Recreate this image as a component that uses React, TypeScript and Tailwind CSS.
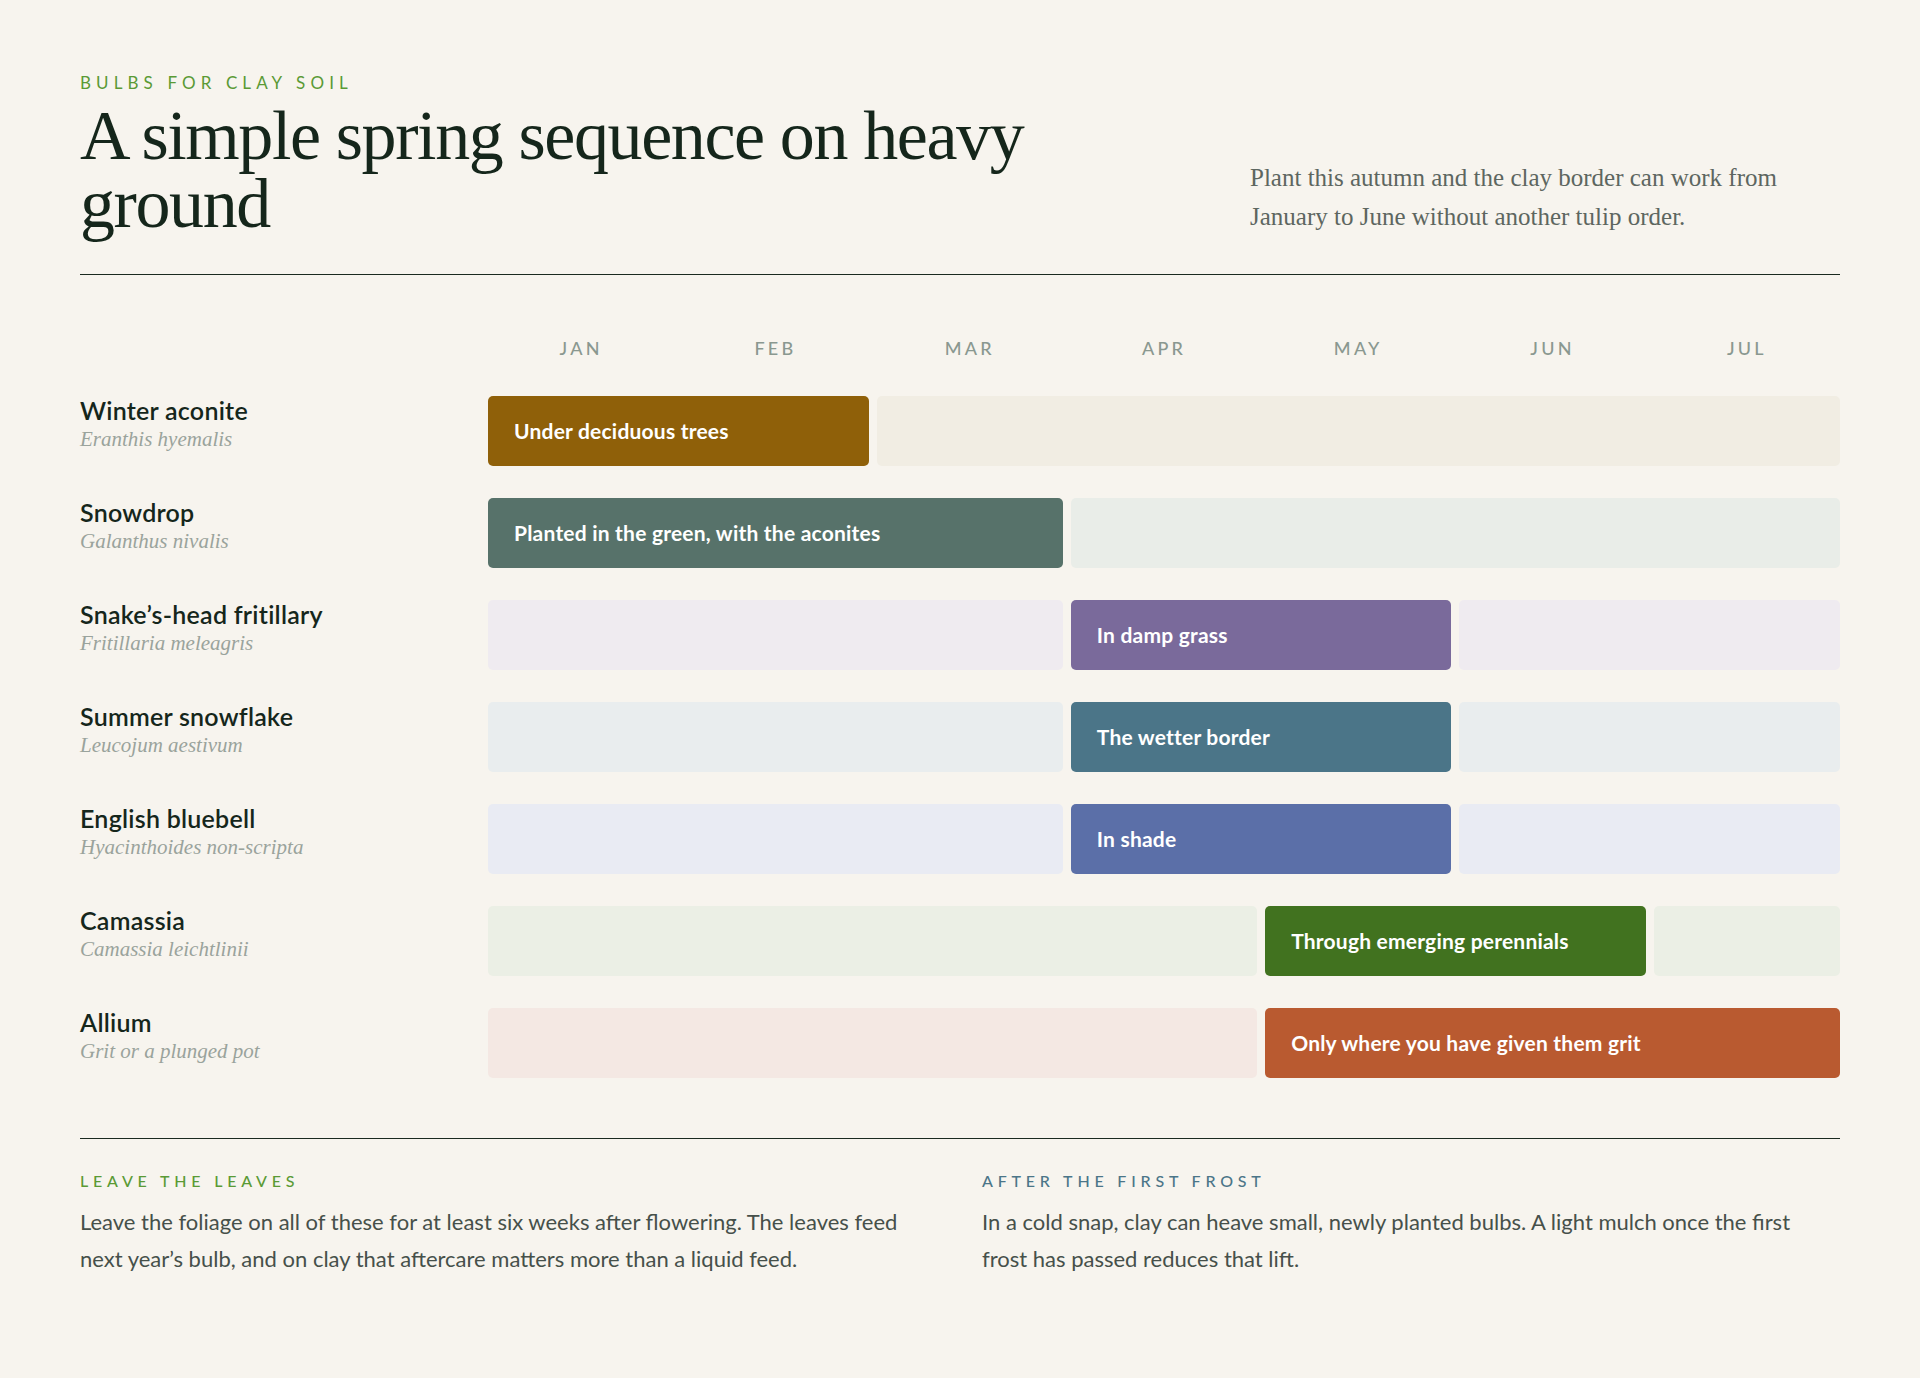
import React from "react";

const sans = { fontFamily: "Lato, 'Open Sans', sans-serif" };
const serif = { fontFamily: "'Liberation Serif', 'DejaVu Serif', serif" };

type Seg = { span: string; dark?: boolean; text?: string };
const rows: { name: string; latin: string; dark: string; light: string; segs: Seg[] }[] = [
  { name: "Winter aconite", latin: "Eranthis hyemalis", dark: "bg-[#8f6009]", light: "bg-[#f1ede3]", segs: [{ span: "col-span-2", dark: true, text: "Under deciduous trees" }, { span: "col-span-5" }] },
  { name: "Snowdrop", latin: "Galanthus nivalis", dark: "bg-[#57726a]", light: "bg-[#e9ede8]", segs: [{ span: "col-span-3", dark: true, text: "Planted in the green, with the aconites" }, { span: "col-span-4" }] },
  { name: "Snake\u2019s-head fritillary", latin: "Fritillaria meleagris", dark: "bg-[#7a6a9b]", light: "bg-[#efebf0]", segs: [{ span: "col-span-3" }, { span: "col-span-2", dark: true, text: "In damp grass" }, { span: "col-span-2" }] },
  { name: "Summer snowflake", latin: "Leucojum aestivum", dark: "bg-[#4b7588]", light: "bg-[#e9edee]", segs: [{ span: "col-span-3" }, { span: "col-span-2", dark: true, text: "The wetter border" }, { span: "col-span-2" }] },
  { name: "English bluebell", latin: "Hyacinthoides non-scripta", dark: "bg-[#5b6fa8]", light: "bg-[#e9ebf3]", segs: [{ span: "col-span-3" }, { span: "col-span-2", dark: true, text: "In shade" }, { span: "col-span-2" }] },
  { name: "Camassia", latin: "Camassia leichtlinii", dark: "bg-[#41721f]", light: "bg-[#ebefe5]", segs: [{ span: "col-span-4" }, { span: "col-span-2", dark: true, text: "Through emerging perennials" }, { span: "col-span-1" }] },
  { name: "Allium", latin: "Grit or a plunged pot", dark: "bg-[#b95a30]", light: "bg-[#f4e8e3]", segs: [{ span: "col-span-4" }, { span: "col-span-3", dark: true, text: "Only where you have given them grit" }] },
];

const months = ["JAN", "FEB", "MAR", "APR", "MAY", "JUN", "JUL"];

export default function App() {
  return (
    <div className="min-h-[1378px] w-full bg-[#f7f4ee] px-[80px] pt-[70px] text-[#1b2a20]" style={sans}>
      <div className="flex items-end justify-between pb-[36px] border-b border-[#1b2a20]">
        <div>
          <div className="text-[17px] tracking-[0.3em] text-[#5a9a35]" style={sans}>BULBS FOR CLAY SOIL</div>
          <h1 className="mt-[6px] text-[70px] leading-[68px] tracking-[-0.02em] text-[#15261b] w-[1000px]" style={serif}>
            A simple spring sequence on heavy ground
          </h1>
        </div>
        <p className="w-[580px] text-[25px] leading-[39px] text-[#5d6660] mr-[10px] mb-[2px]" style={serif}>
          Plant this autumn and the clay border can work from January to June without another tulip order.
        </p>
      </div>

      <div className="grid grid-cols-[400px_repeat(7,1fr)] gap-x-[8px] mt-[60px]">
        <div />
        {months.map((m) => (
          <div key={m} className="text-center text-[18px] tracking-[0.18em] text-[#8a9890] font-medium">{m}</div>
        ))}
      </div>

      <div className="mt-[34px] flex flex-col gap-[32px]">
        {rows.map((r) => (
          <div key={r.name} className="grid grid-cols-[400px_repeat(7,1fr)] gap-x-[8px] h-[70px]">
            <div className="flex flex-col -mt-[2px]">
              <div className="text-[25px] font-semibold tracking-[0.01em] text-[#15261b] leading-[32px]">{r.name}</div>
              <div className="text-[21px] italic text-[#9aa39c] leading-[26px]" style={serif}>{r.latin}</div>
            </div>
            {r.segs.map((s, i) => (
              <div key={i} className={`${s.span} ${s.dark ? r.dark : r.light} rounded-[5px] flex items-center px-[26px]`}>
                {s.text && <span className="text-white text-[21px] font-bold tracking-[0.01em]">{s.text}</span>}
              </div>
            ))}
          </div>
        ))}
      </div>

      <div className="mt-[60px] border-t border-[#1b2a20] grid grid-cols-2 gap-x-[44px] pt-[30px]">
        <div>
          <div className="text-[16px] tracking-[0.3em] text-[#5a9a35] font-medium">LEAVE THE LEAVES</div>
          <p className="mt-[10px] text-[22px] leading-[37px] text-[#46504a]">
            Leave the foliage on all of these for at least six weeks after flowering. The leaves feed next year’s bulb, and on clay that aftercare matters more than a liquid feed.
          </p>
        </div>
        <div>
          <div className="text-[16px] tracking-[0.3em] text-[#4b7588] font-medium">AFTER THE FIRST FROST</div>
          <p className="mt-[10px] text-[22px] leading-[37px] text-[#46504a]">
            In a cold snap, clay can heave small, newly planted bulbs. A light mulch once the first frost has passed reduces that lift.
          </p>
        </div>
      </div>
    </div>
  );
}
